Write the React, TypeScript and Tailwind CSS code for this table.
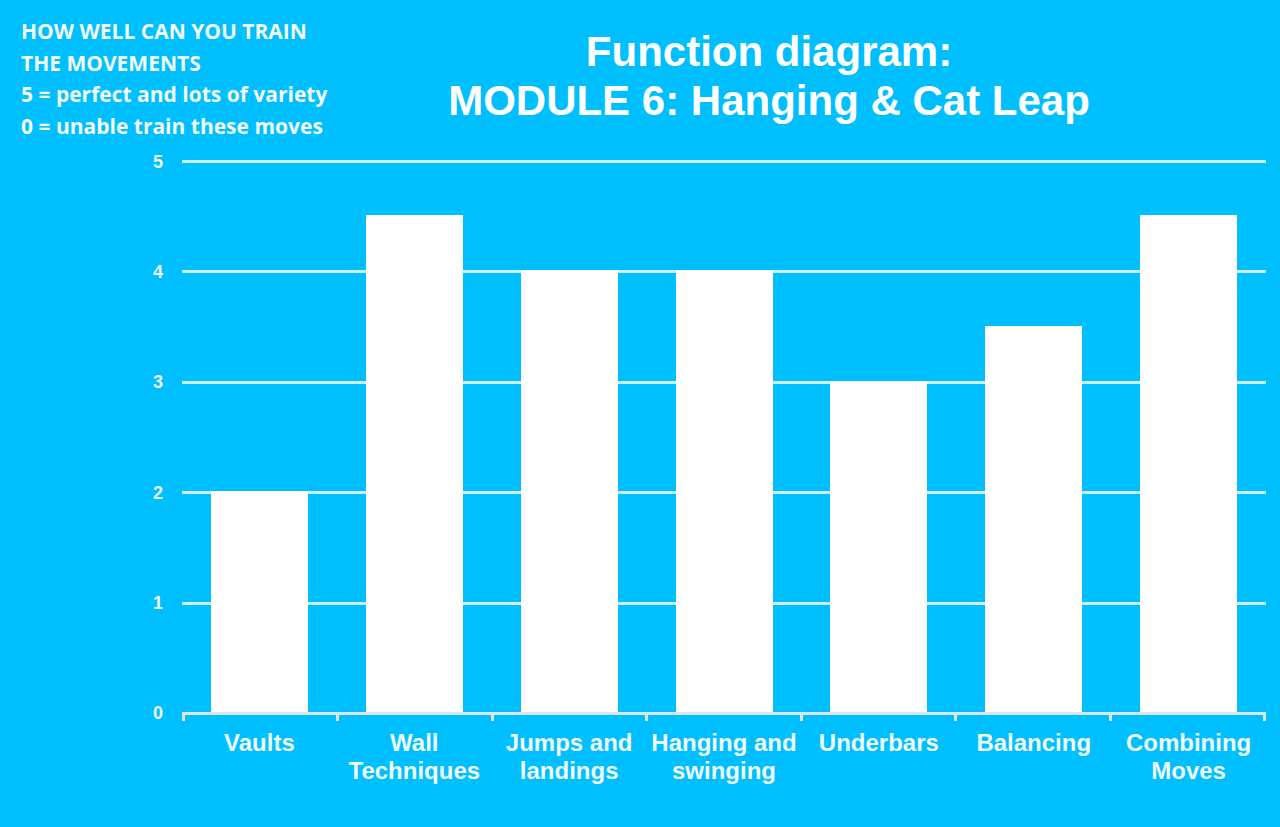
const BARS = [
  { label: ['Vaults'], value: 2 },
  { label: ['Wall', 'Techniques'], value: 4.5 },
  { label: ['Jumps and', 'landings'], value: 4 },
  { label: ['Hanging and', 'swinging'], value: 4 },
  { label: ['Underbars'], value: 3 },
  { label: ['Balancing'], value: 3.5 },
  { label: ['Combining', 'Moves'], value: 4.5 },
];

const TICKS = [5, 4, 3, 2, 1, 0];
const UNIT = 110.4; // px per scale step

function Header() {
  return (
    <div className="flex h-[160px]">
      <div
        className="w-[258px] shrink-0 whitespace-nowrap pl-[21px] pt-[16px] text-[21px] font-bold leading-[31.5px] text-[#f2fbff]"
        style={{ fontFamily: '"Open Sans", Lato, sans-serif' }}
      >
        <div>HOW WELL CAN YOU TRAIN</div>
        <div>THE MOVEMENTS</div>
        <div>5 = perfect and lots of variety</div>
        <div>0 = unable train these moves</div>
      </div>
      <h1 className="flex-1 pt-[27px] text-center text-[42px] font-bold leading-[49px] text-white">
        <div>Function diagram:</div>
        <div>MODULE 6: Hanging &amp; Cat Leap</div>
      </h1>
    </div>
  );
}

function YAxis() {
  return (
    <div className="flex h-[555px] w-[182px] shrink-0 flex-col justify-between pr-[19px]">
      {TICKS.map((t) => (
        <div key={t} className="flex h-[3px] items-center justify-end">
          <span className="text-[18px] font-bold leading-none text-[#eef8fd]">{t}</span>
        </div>
      ))}
    </div>
  );
}

function Plot() {
  return (
    <div className="w-[1084px] shrink-0">
      <div className="relative h-[555px]">
        {/* gridlines sit behind the bars */}
        <div className="absolute inset-0 flex flex-col justify-between">
          {TICKS.map((t) => (
            <div
              key={t}
              className={t === 0 ? 'h-[3px] bg-[#dce6eb]' : 'h-[3px] bg-[#cfeefb]'}
            />
          ))}
        </div>
        <div className="relative flex h-[552px] items-end">
          {BARS.map((b) => (
            <div key={b.label.join(' ')} className="flex flex-1 justify-center">
              <div className="w-[97px] bg-white" style={{ height: b.value * UNIT }} />
            </div>
          ))}
        </div>
      </div>
      <div className="flex h-[6px] justify-between">
        {Array.from({ length: 8 }).map((_, i) => (
          <div key={i} className="w-[3px] bg-[#dce6eb]" />
        ))}
      </div>
      <div className="flex pt-[8px]">
        {BARS.map((b) => (
          <div
            key={b.label.join(' ')}
            className="flex-1 text-center text-[24px] font-bold leading-[28px] text-[#eefaff]"
          >
            {b.label.map((l) => (
              <div key={l} className="whitespace-nowrap">{l}</div>
            ))}
          </div>
        ))}
      </div>
    </div>
  );
}

export default function App() {
  return (
    <div
      className="h-[827px] w-[1280px] overflow-hidden bg-[#00bfff]"
      style={{ fontFamily: '"Liberation Sans", Arial, sans-serif' }}
    >
      <Header />
      <div className="flex">
        <YAxis />
        <Plot />
      </div>
    </div>
  );
}
